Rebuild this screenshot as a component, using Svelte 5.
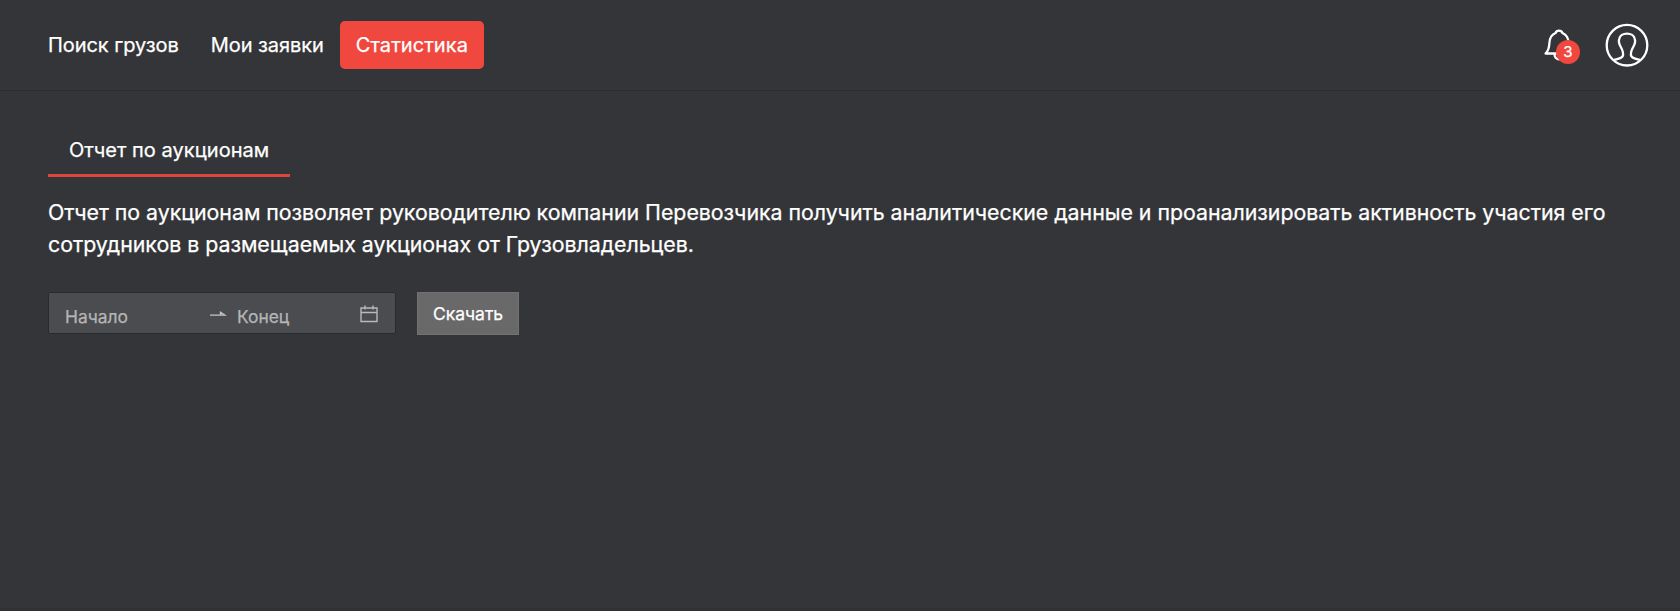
<script>
  const links = [
    { label: 'Поиск грузов', active: false },
    { label: 'Мои заявки', active: false },
    { label: 'Статистика', active: true }
  ];
</script>

<div class="page">
  <header>
    <nav>
      {#each links as link}
        <a class:active={link.active} href="#top">{link.label}</a>
      {/each}
    </nav>
    <div class="actions">
      <div class="bell">
        <svg width="32" height="36" viewBox="0 0 32 36" fill="none" stroke="#fff" stroke-width="2.3" stroke-linejoin="round">
          <path d="M1.500 25.500C5 22.500 5.200 19 5.400 15C5.600 9 8 6.500 11.500 5C12.700 1.700 17.300 1.700 18.500 5C22 6.500 24.400 9 24.600 15C24.800 19 25 22.500 28.500 25.500Z" />
          <path d="M10.500 26C10.500 33 19.500 33 19.500 26" />
        </svg>
        <span class="count">3</span>
      </div>
      <svg class="avatar" width="44" height="44" viewBox="0 0 44 44" fill="none" stroke="#fff" stroke-width="2.3">
        <circle cx="22" cy="22.200" r="20.300" />
        <path d="M8.700 37C12 36 16 36 17.700 33.200C19 30 17.500 27 15.800 24C14 21 13.600 18 14.200 16C15.200 8.700 28.800 8.700 29.800 16C30.400 18 30 21 28.200 24C26.500 27 25 30 26.300 33.200C28 36 32 36 35.300 37" />
      </svg>
    </div>
  </header>

  <main>
    <div class="tabs"><div class="tab">Отчет по аукционам</div></div>
    <p>Отчет по аукционам позволяет руководителю компании Перевозчика получить аналитические данные и проанализировать активность участия его сотрудников в размещаемых аукционах от Грузовладельцев.</p>
    <div class="controls">
      <div class="range">
        <span class="start">Начало</span>
        <svg class="arrow" width="18" height="8" viewBox="0 0 18 8"><path d="M1 5.200H16L11.500 2.200V5" fill="none" stroke="#c4c4c5" stroke-width="1.300" /></svg>
        <span class="end">Конец</span>
        <svg class="calendar" width="18" height="18" viewBox="0 0 18 18" fill="none" stroke="#b9b9ba" stroke-width="1.400">
          <path d="M1 3H17V16.500H1ZM1 7.500H17M5 0.500V4.500M13 0.500V4.500" />
        </svg>
      </div>
      <button>Скачать</button>
    </div>
  </main>
</div>

<style>
  :global(body) { margin: 0; background: #343538; }
  .page { min-height: 611px; box-sizing: border-box; background: #343538; color: #fff; font-family: Inter, sans-serif; font-size: 20px; border-bottom: 3px solid #303134; -webkit-text-stroke: 0.25px; }
  header { height: 91px; box-sizing: border-box; border-bottom: 1px solid #2c2d30; display: flex; justify-content: space-between; padding: 21px 31px 0 32px; }
  nav { display: flex; }
  a { height: 48px; line-height: 48px; padding: 0 16px; color: #fff; text-decoration: none; border-radius: 5px; white-space: nowrap; letter-spacing: -0.06px; }
  .active { background: #f0483e; letter-spacing: 0.05px; }
  .actions { display: flex; align-items: flex-start; gap: 29px; padding-top: 2px; }
  .bell { position: relative; width: 32px; height: 36px; padding-top: 5px; }
  .count { position: absolute; left: 12px; top: 17px; width: 24px; height: 24px; border-radius: 50%; background: #f0483e; font-size: 15px; line-height: 24px; text-align: center; }
  main { padding: 35px 48px 0; }
  .tabs { display: flex; }
  .tab { height: 48px; line-height: 48px; padding: 0 21px; border-bottom: 3px solid #dc463b; letter-spacing: 0.05px; }
  p { margin: 19px 0 0; font-size: 21.333px; line-height: 32px; letter-spacing: -0.018px; }
  .controls { display: flex; margin-top: 32px; }
  .range { display: flex; width: 348px; height: 42px; box-sizing: border-box; background: #4b4c4f; border: 1px solid #292a2d; border-radius: 2px; padding: 0 17px 0 16px; font-size: 17.4px; color: #b5b5b6; line-height: 47px; }
  .start { width: 144px; }
  .arrow { margin-top: 17px; }
  .end { margin-left: 10px; flex: 1; }
  .calendar { margin-top: 12px; }
  button { margin-left: 21px; height: 43px; width: 102px; padding: 0; border: 1px solid #727272; background: #696969; color: #fff; font: 17.5px/40px Inter, sans-serif; -webkit-text-stroke: 0.25px; }
</style>
